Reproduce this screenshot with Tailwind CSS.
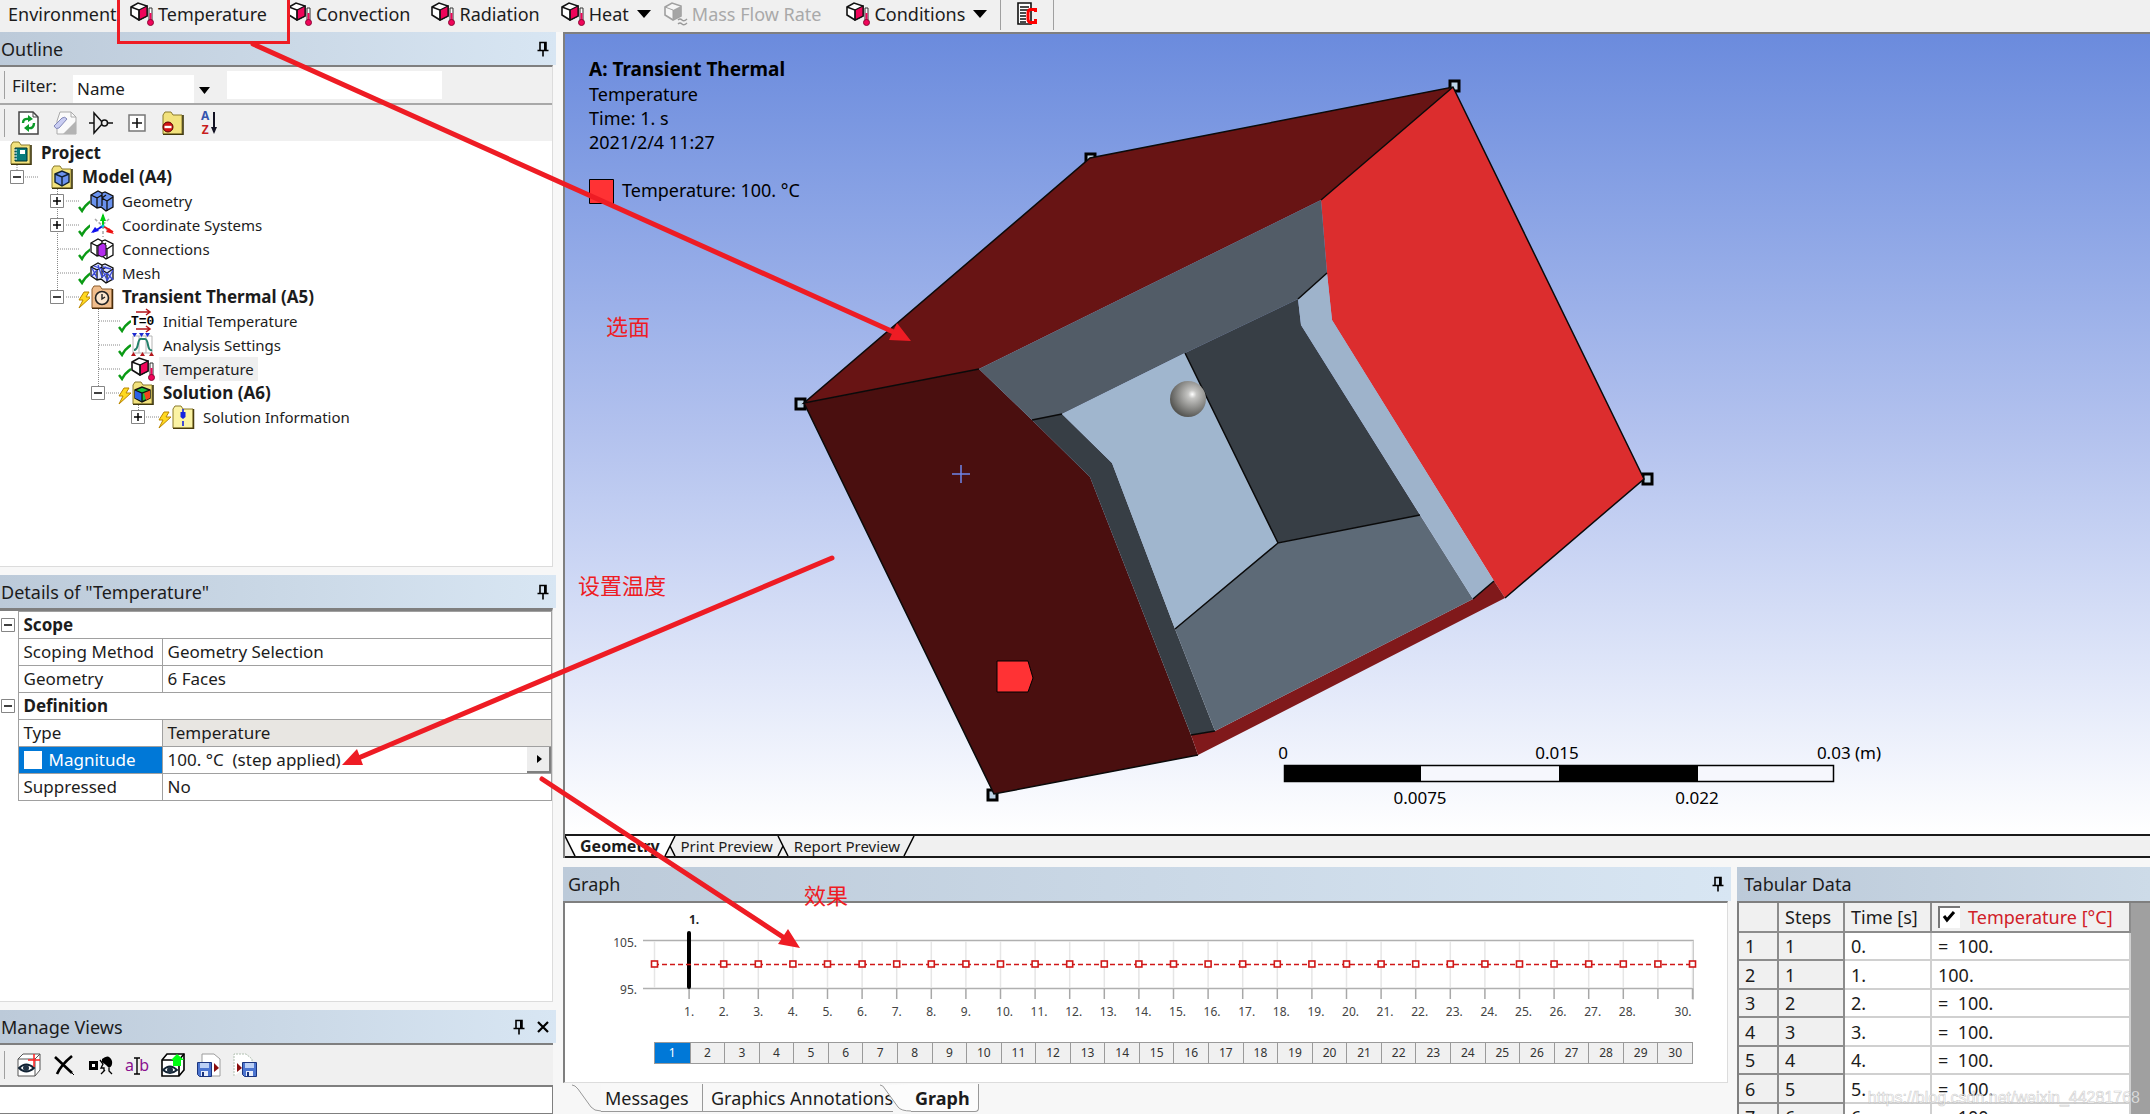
<!DOCTYPE html>
<html lang="en">
<head>
  <meta charset="UTF-8" />
  <meta name="viewport" content="width=device-width, initial-scale=1.0" />
  <title>A: Transient Thermal - Mechanical</title>
  <script src="https://cdn.jsdelivr.net/npm/@tailwindcss/browser@4"></script>
</head>
<body class="relative flex h-screen flex-col overflow-hidden bg-[#f7f7f7] font-['Noto_Sans','Noto_Sans_CJK_SC',sans-serif] text-[17px] leading-6 text-[#1c1c1c]">

  <!-- Shared icons -->
  <svg class="hidden">
    <symbol id="load" viewBox="0 0 24 24">
      <path d="M1 5 8 1l9 3v10l-8 4-8-5z" fill="#fff" stroke="#111" stroke-width="1.6" />
      <path d="M9 8l8-4v10l-8 4z" fill="#f0055a" stroke="#111" stroke-width="1.2" />
      <path d="M1 5l8 3v10" fill="none" stroke="#111" stroke-width="1.4" />
      <path d="M19 6h3v12h-3z" fill="#fff" stroke="#333" />
      <path d="M19.500 11h2v8h-2z" fill="#f0055a" />
      <circle cx="20.500" cy="20.500" r="3" fill="#f0055a" stroke="#8a0a35" />
    </symbol>
    <symbol id="pin" viewBox="0 0 12 16">
      <path d="M3 9V1.500h6V9M0.500 9.500h11M6 10v5.500" fill="none" stroke="#000" stroke-width="1.600" />
      <path d="M7 1h2v8H7z" fill="#000" />
    </symbol>
    <symbol id="plus" viewBox="0 0 14 14">
      <path d="M.5.5h13v13H.5z" fill="#fff" stroke="#858585" /><path d="M3 7h8M7 3v8" stroke="#000" stroke-width="1.500" />
    </symbol>
    <symbol id="minus" viewBox="0 0 14 14">
      <path d="M.5.5h13v13H.5z" fill="#fff" stroke="#858585" /><path d="M3 7h8" stroke="#000" stroke-width="1.500" />
    </symbol>
    <symbol id="check" viewBox="0 0 14 14">
      <path d="M1 8l3 4q3-6 9-10" fill="none" stroke="#0a9a14" stroke-width="2.400" />
    </symbol>
    <symbol id="bolt" viewBox="0 0 14 18">
      <path d="M6 1h5L8 6h5L1 17l4-8H1z" fill="#ffd91f" stroke="#b98500" />
    </symbol>
    <symbol id="folder" viewBox="0 0 24 24">
      <path d="M2 4l2-3h6l2 3h9v19H2z" fill="#f2e27d" stroke="#8a7a2a" />
      <path d="M22 4v19.500H2" fill="none" stroke="#3f370c" stroke-width="1.600" />
    </symbol>
    <symbol id="cubes" viewBox="0 0 24 24">
      <path d="M1 6l7-4 4 2 3-1 8 4v11l-7 4-5-4-4 1-6-4z" fill="currentColor" stroke="#111" stroke-width="1.300" />
      <path d="M1 6l6 3v10M7 9l5-3M12 4v13M12 9l5 3v10M17 12l6-4M12 9l4-3" fill="none" stroke="#111" stroke-width="1.300" />
    </symbol>
    <symbol id="disk" viewBox="0 0 15 15">
      <path d="M.5.5h14v14h-12l-2-2z" fill="#4b74cf" stroke="#1b357f" /><path d="M3 1h9v5H3z" fill="#bcd0f5" /><path d="M4 9h7v5H4z" fill="#e8eefb" /><path d="M5 10h2v4H5z" fill="#1b357f" />
    </symbol>
  </svg>

  <!-- Environment toolbar -->
  <header class="flex h-8 shrink-0 items-center gap-[21px] bg-[#f0f0f0] pb-1 text-[18px]">
    <div class="flex w-[109px] items-center gap-2"><span class="h-6 w-px bg-[#a0a0a0]"></span>Environment</div>
    <button class="flex items-center gap-1"><svg class="size-6"><use href="#load" /></svg>Temperature</button>
    <button class="flex items-center gap-1"><svg class="size-6"><use href="#load" /></svg>Convection</button>
    <button class="flex items-center gap-1"><svg class="size-6"><use href="#load" /></svg>Radiation</button>
    <button class="flex items-center gap-1"><svg class="size-6"><use href="#load" /></svg>Heat
      <svg class="ml-1 h-2 w-[14px]" viewBox="0 0 14 8"><path d="M0 0h14L7 8z" /></svg></button>
    <button class="-ml-2 flex items-center gap-1 text-[#a9a9a9]" disabled>
      <svg class="size-6" viewBox="0 0 24 24"><path d="M1 5 8 1l9 3v10l-8 4-8-5z" fill="#f6f6f6" stroke="#a0a0a0" stroke-width="1.600" /><path d="M9 8l8-4v10l-8 4z" fill="#a5a5a5" /><path d="M1 5l8 3v10" fill="none" stroke="#a0a0a0" /><path d="M14 18q2-2 4 0t5-1M14 22q2-2 4 0t5-1" fill="none" stroke="#999" stroke-width="1.400" /></svg>Mass Flow Rate</button>
    <button class="ml-1 flex items-center gap-1"><svg class="size-6"><use href="#load" /></svg>Conditions
      <svg class="ml-1 h-2 w-[14px]" viewBox="0 0 14 8"><path d="M0 0h14L7 8z" /></svg></button>
    <div class="-ml-2 flex items-center gap-4">
      <span class="h-8 w-px bg-[#a0a0a0]"></span>
      <button aria-label="Commands"><svg class="h-6 w-5" viewBox="0 0 20 24"><path d="M1 1h13v21H1z" fill="#fff" stroke="#111" stroke-width="1.600" /><path d="M3 5h9M3 8h9M3 11h6M3 14h6M3 17h6M3 20h6" stroke="#111" stroke-width="1.400" /><path d="M18.500 10V7.500h-5Q11 8 11 11v6q0 3 2.500 3.500h5V17" fill="none" stroke="#f00" stroke-width="3" /></svg></button>
      <span class="h-8 w-px bg-[#a0a0a0]"></span>
    </div>
  </header>

  <div class="flex min-h-0 flex-1 gap-[7px]">

    <!-- Left column -->
    <aside class="flex w-[556px] shrink-0 flex-col">
      <section class="flex h-[535px] shrink-0 flex-col">
        <div class="flex h-[33px] shrink-0 items-center justify-between bg-linear-to-r from-[#bccad9] to-[#d8e6f3] pr-[7px] pl-px text-[18px]"><h2>Outline</h2><svg class="h-4 w-3"><use href="#pin" /></svg></div>
        <div class="mr-[3px] flex min-h-0 flex-1 flex-col border-t-2 border-r border-b border-t-[#7f7f7f] border-r-[#dcdcdc] border-b-[#dcdcdc] bg-white">
          <div class="flex h-[38px] shrink-0 items-center border-b-2 border-[#a8a8a8] bg-[#f0f0f0] pl-1">
            <span class="h-7 w-px bg-[#a0a0a0]"></span>
            <label for="filter" class="w-[68px] pt-[2px] pl-[7px]">Filter:</label>
            <div class="relative mt-2 h-7 w-[142px]">
              <select id="filter" class="h-7 w-full appearance-none bg-white pl-1"><option>Name</option></select>
              <svg class="pointer-events-none absolute top-0 right-0 h-7 w-[21px] bg-[#f0f0f0]" viewBox="0 0 21 28"><path d="M5 12h11l-5.500 7z" /></svg>
            </div>
            <input type="text" aria-label="Filter text" class="ml-3 h-7 w-[215px] bg-white px-1" />
          </div>
          <div class="flex h-9 shrink-0 items-center gap-3 bg-[#f0f0f0] pl-1">
            <span class="h-7 w-px bg-[#a0a0a0]"></span>
            <button aria-label="Refresh"><svg class="size-6" viewBox="0 0 24 24"><path d="M2 1h14l5 5v17H2z" fill="#fff" stroke="#444" stroke-width="1.500" /><path d="M16 1v5h5" fill="none" stroke="#444" /><path d="M6 12q0-5 6-4M17 12q0 6-6 5" fill="none" stroke="#0b9a28" stroke-width="2.400" /><path d="M11 4l5 4-5 3zM12 13v8l-5-4z" fill="#0b9a28" /></svg></button>
            <button aria-label="Clear"><svg class="size-6" viewBox="0 0 24 24"><path d="M7 1h11l5 5v17H4V10z" fill="#fafafa" stroke="#aaa" /><path d="M11 22l12-12v13H10z" fill="#b3b3b3" /><path d="M18 1v5h5" fill="none" stroke="#aaa" /><path d="M1 15l8-8q3-2 5 1l-8 9q-3 2-5-2z" fill="#c9cdf2" stroke="#8388b8" /></svg></button>
            <button aria-label="Graph filter"><svg class="size-6" viewBox="0 0 24 24"><path d="M0 12h5M5 2v20l9-10zM18 12h6" fill="none" stroke="#111" stroke-width="1.500" /><circle cx="15.500" cy="12" r="3" fill="#f0f0f0" stroke="#111" stroke-width="1.500" /></svg></button>
            <button aria-label="Expand all"><svg class="size-6" viewBox="0 0 24 24"><path d="M4 4h16v16H4z" fill="#fff" stroke="#777" stroke-width="1.500" /><path d="M7 12h10M12 7v10" stroke="#111" stroke-width="1.600" /></svg></button>
            <button aria-label="Hide folders"><svg class="size-6" viewBox="0 0 24 24"><use href="#folder" width="24" height="24" /><circle cx="7" cy="16" r="5" fill="#d21414" stroke="#500" /><path d="M3.500 16h7" stroke="#fff" stroke-width="2.400" /></svg></button>
            <button aria-label="Sort" class="flex items-center pl-1"><span class="flex flex-col text-[12px] leading-[14px] font-bold"><span class="text-[#3554ae]">A</span><span class="text-[#c81d1d]">Z</span></span><svg class="ml-px h-6 w-2" viewBox="0 0 8 24"><path d="M4 1v20" stroke="#112" stroke-width="2" /><path d="M1 16h6l-3 7z" fill="#112" /></svg></button>
          </div>

          <ul class="text-[15px]">
            <li class="flex h-6 items-center text-[17px] font-bold"><svg class="ml-[9px] size-6" viewBox="0 0 24 24"><use href="#folder" width="24" height="24" /><path d="M6 7h12v13H6z" fill="#087c7c" stroke="#033" /><path d="M11 9h5v4h-5z" fill="#fff" /><path d="M5 9h3M5 12h3M5 15h3M5 18h3" stroke="#fff" /></svg><span class="pl-2">Project</span></li>
            <li class="flex h-6 items-center text-[17px] font-bold">
              <svg class="h-6 w-[50px]"><path d="M17 0v5M25 12h14" stroke="#888" stroke-dasharray="1 1" /><use href="#minus" x="10" y="5" width="14" height="14" /></svg>
              <svg class="size-6 text-[#6d93ef]"><use href="#folder" width="24" height="24" /><path d="M5 9l7-3 7 3v8l-7 4-7-4z" fill="currentColor" stroke="#123" stroke-width="1.400" /><path d="M5 9l7 3 7-3M12 12v8" fill="none" stroke="#123" stroke-width="1.400" /></svg><span class="pl-2">Model (A4)</span></li>
            <li class="flex h-6 items-center">
              <svg class="h-6 w-[90px]"><path d="M57.500 0v24M66 12h14" stroke="#888" stroke-dasharray="1 1" /><use href="#plus" x="50" y="5" width="14" height="14" /><use href="#check" x="78" y="10" width="14" height="14" /></svg>
              <svg class="size-6 text-[#6a92ee]"><use href="#cubes" /></svg><span class="pl-2">Geometry</span></li>
            <li class="flex h-6 items-center">
              <svg class="h-6 w-[90px]"><path d="M57.500 0v24M66 12h14" stroke="#888" stroke-dasharray="1 1" /><use href="#plus" x="50" y="5" width="14" height="14" /><use href="#check" x="78" y="10" width="14" height="14" /></svg>
              <svg class="size-6" viewBox="0 0 24 24"><path d="M5 6l14 13M19 6L7 17M13 13v11" stroke="#aaa" stroke-width="1.600" stroke-dasharray="3 2" /><path d="M13 14V2" stroke="#0c1" stroke-width="2" /><path d="M13 0l3 8h-6z" fill="#0c1" /><path d="M13 13l10 6" stroke="#e11" stroke-width="2" /><path d="M24 21l-8-2 3-4z" fill="#e11" /><path d="M13 13L3 19" stroke="#11e" stroke-width="2" /><path d="M1 20l4-6 4 4z" fill="#11e" /><circle cx="13" cy="13" r="1.600" fill="#0cc" /></svg><span class="pl-2">Coordinate Systems</span></li>
            <li class="flex h-6 items-center">
              <svg class="h-6 w-[90px]"><path d="M57.500 0v24M58 12h22" stroke="#888" stroke-dasharray="1 1" /><use href="#check" x="78" y="10" width="14" height="14" /></svg>
              <svg class="size-6 text-white" viewBox="0 0 24 24"><use href="#cubes" /><path d="M8 9l5-3 3 2v10l-4 2-4-2z" fill="#b32bee" stroke="#111" /></svg><span class="pl-2">Connections</span></li>
            <li class="flex h-6 items-center">
              <svg class="h-6 w-[90px]"><path d="M57.500 0v24M58 12h22" stroke="#888" stroke-dasharray="1 1" /><use href="#check" x="78" y="10" width="14" height="14" /></svg>
              <svg class="size-6 text-[#dfe4ff]" viewBox="0 0 24 24"><use href="#cubes" /><path d="M2 7l5 10M2 15l5-6M4 5l8 3M12 8l5 11M12 16l5-4M17 20l6-11M17 12l6 7M13 6l8 2M8 4l4 12" fill="none" stroke="#3a48d8" stroke-width="1.300" /></svg><span class="pl-2">Mesh</span></li>
            <li class="flex h-6 items-center text-[17px] font-bold">
              <svg class="h-6 w-[90px]"><path d="M57.500 0v5M66 12h14" stroke="#888" stroke-dasharray="1 1" /><use href="#minus" x="50" y="5" width="14" height="14" /><use href="#bolt" x="78" y="6" width="14" height="18" /></svg>
              <svg class="size-6" viewBox="0 0 24 24"><path d="M2 4l2-3h6l2 3h10v19H2z" fill="#f0bd8c" stroke="#8a5a2a" /><path d="M22.500 4v19.500H2" fill="none" stroke="#4a2c0c" stroke-width="1.500" /><circle cx="12" cy="13" r="6.500" fill="#fbe6cf" stroke="#222" stroke-width="1.600" /><path d="M12 9v5l3-2" fill="none" stroke="#222" stroke-width="1.400" /></svg><span class="pl-2">Transient Thermal (A5)</span></li>
            <li class="flex h-6 items-center">
              <svg class="h-6 w-[131px]"><path d="M98.500 0v24M99 12h21" stroke="#888" stroke-dasharray="1 1" /><use href="#check" x="118" y="10" width="14" height="14" /></svg>
              <svg class="h-6 w-6 overflow-visible" viewBox="0 0 24 24"><path d="M5 3h14M15 0l4 3-4 3M5 20h14M15 17l4 3-4 3" fill="none" stroke="#b3161b" stroke-width="1.500" /><text x="0" y="16" font-size="13" font-weight="700" font-family="Liberation Mono">T=0</text></svg><span class="pl-2">Initial Temperature</span></li>
            <li class="flex h-6 items-center">
              <svg class="h-6 w-[131px]"><path d="M98.500 0v24M99 12h21" stroke="#888" stroke-dasharray="1 1" /><use href="#check" x="118" y="10" width="14" height="14" /></svg>
              <svg class="size-6" viewBox="0 0 24 24"><path d="M2 3h19v17H2zM8 3v17M15 3v17" fill="none" stroke="#b5b5b5" /><path d="M3 17q3 0 4-6t4-5h3q2 0 3 6t4 5" fill="none" stroke="#22806a" stroke-width="2" /><path d="M1 0h5L3.500 4zM8 0h5l-2.500 4zM14 0h5l-2.500 4z" fill="#1c2bd0" /><path d="M0 23h5l-2.500-4zM9 23h5l-2.500-4zM18 23h5l-2.500-4z" fill="#b3161b" /></svg><span class="pl-2">Analysis Settings</span></li>
            <li class="flex h-6 items-center">
              <svg class="h-6 w-[131px]"><path d="M98.500 0v24M99 12h21" stroke="#888" stroke-dasharray="1 1" /><use href="#check" x="118" y="10" width="14" height="14" /></svg>
              <svg class="size-6"><use href="#load" /></svg><span class="ml-1 bg-[#efefef] px-1">Temperature</span></li>
            <li class="flex h-6 items-center text-[17px] font-bold">
              <svg class="h-6 w-[131px]"><path d="M98.500 0v5M106 12h14" stroke="#888" stroke-dasharray="1 1" /><use href="#minus" x="91" y="5" width="14" height="14" /><use href="#bolt" x="118" y="6" width="14" height="18" /></svg>
              <svg class="size-6" viewBox="0 0 24 24"><use href="#folder" width="24" height="24" /><path d="M4 9l7-3 8 3v8l-8 4-7-4z" fill="#18c43a" stroke="#111" stroke-width="1.400" /><path d="M4 9l7 3v8l-7-3z" fill="#2a62e8" /><path d="M13 12l6-3v8l-4 2z" fill="#f0441c" /><path d="M4 9l7 3 8-3M11 12v8" fill="none" stroke="#111" stroke-width="1.300" /></svg><span class="pl-2">Solution (A6)</span></li>
            <li class="flex h-6 items-center">
              <svg class="h-6 w-[171px]"><path d="M138.500 0v5M146 12h14" stroke="#888" stroke-dasharray="1 1" /><use href="#plus" x="131" y="5" width="14" height="14" /><use href="#bolt" x="158" y="6" width="14" height="18" /></svg>
              <svg class="size-6" viewBox="0 0 24 24"><path d="M2 4l2-3h6l2 3h10v19H2z" fill="#fbf3a4" stroke="#8a7a2a" /><path d="M22.500 4v19.500H2" fill="none" stroke="#4a3c0c" stroke-width="1.500" /><path d="M12 4v9M12 16v5" stroke="#1424e0" stroke-width="1.600" /><path d="M9.500 7h5v5l-2.500 2-2.500-2z" fill="#1424e0" /></svg><span class="pl-2">Solution Information</span></li>
          </ul>
        </div>
      </section>

      <section class="mt-2 flex min-h-0 flex-1 flex-col">
        <div class="flex h-[33px] shrink-0 items-center justify-between bg-linear-to-r from-[#bccad9] to-[#d8e6f3] pr-[7px] pl-px text-[18px]"><h2>Details of "Temperature"</h2><svg class="h-4 w-3"><use href="#pin" /></svg></div>
        <div class="mr-[3px] min-h-0 flex-1 border-t-[3px] border-r border-b border-t-[#7f7f7f] border-r-[#dcdcdc] border-b-[#dcdcdc] bg-white">
          <table class="w-full table-fixed border-collapse">
            <colgroup><col class="w-[18px]"><col class="w-[144px]"><col></colgroup>
            <tr class="h-[27px]"><td><svg class="ml-px size-[14px]"><use href="#minus" /></svg></td><th colspan="2" class="border border-[#a0a0a0] pl-[5px] text-left">Scope</th></tr>
            <tr class="h-[27px]"><td></td><td class="border border-[#a0a0a0] pl-[5px] whitespace-nowrap">Scoping Method</td><td class="border border-[#a0a0a0] pl-[5px]">Geometry Selection</td></tr>
            <tr class="h-[27px]"><td></td><td class="border border-[#a0a0a0] pl-[5px]">Geometry</td><td class="border border-[#a0a0a0] pl-[5px]">6 Faces</td></tr>
            <tr class="h-[27px]"><td><svg class="ml-px size-[14px]"><use href="#minus" /></svg></td><th colspan="2" class="border border-[#a0a0a0] pl-[5px] text-left">Definition</th></tr>
            <tr class="h-[27px]"><td></td><td class="border border-[#a0a0a0] pl-[5px]">Type</td><td class="border border-[#a0a0a0] bg-[#e8e6e2] pl-[5px]">Temperature</td></tr>
            <tr class="h-[27px]"><td></td><td class="border border-[#a0a0a0] bg-[#0078d7] pl-[5px] text-white"><label class="flex items-center gap-[7px]"><input type="checkbox" class="size-[18px] appearance-none bg-white">Magnitude</label></td><td class="border border-[#a0a0a0] pl-[5px]"><div class="flex items-center justify-between">100. °C &nbsp;(step applied)<button aria-label="More" class="h-[26px] w-6 border-r-2 border-b-2 border-[#7f7f7f] bg-[#ededed] pl-[10px]"><svg class="h-2 w-[5px]" viewBox="0 0 5 8"><path d="M0 0l5 4-5 4z" /></svg></button></div></td></tr>
            <tr class="h-[27px]"><td></td><td class="border border-[#a0a0a0] pl-[5px]">Suppressed</td><td class="border border-[#a0a0a0] pl-[5px]">No</td></tr>
          </table>
        </div>
      </section>

      <section class="mt-2 flex h-[104px] shrink-0 flex-col">
        <div class="flex h-[33px] shrink-0 items-center gap-3 bg-linear-to-r from-[#bccad9] to-[#d8e6f3] pr-[7px] pl-px text-[18px]"><h2 class="flex-1">Manage Views</h2><svg class="h-4 w-3"><use href="#pin" /></svg><button aria-label="Close"><svg class="size-3" viewBox="0 0 12 12"><path d="M1 1l10 10M11 1L1 11" stroke="#000" stroke-width="2.200" /></svg></button></div>
        <div class="mr-[3px] flex flex-1 flex-col border-t-2 border-[#7f7f7f] bg-[#f0f0f0]">
          <div class="flex h-10 items-center gap-3 pl-1">
            <span class="h-7 w-px bg-[#a0a0a0]"></span>
            <button aria-label="Create view"><svg class="size-6" viewBox="0 0 24 24"><path d="M1 6l5-5h17v16l-5 6H1z" fill="#fff" stroke="#555" /><path d="M1 6h17v17M18 6l5-5" fill="none" stroke="#555" /><path d="M2 15q7-7 15 0-8 7-15 0z" fill="#fff" stroke="#123" stroke-width="1.800" /><circle cx="9" cy="15" r="3" fill="#234" /><path d="M17 1v13M11 7h12" stroke="#f22" stroke-width="1.500" /></svg></button>
            <button aria-label="Delete"><svg class="size-6" viewBox="0 0 24 24"><path d="M2 4l17 16M19 3Q8 12 4 21" fill="none" stroke="#000" stroke-width="2.600" /><path d="M19 20l2 2" stroke="#000" /></svg></button>
            <button aria-label="Apply view"><svg class="size-6" viewBox="0 0 24 24"><path d="M1.500 9.500h6v6h-6z" fill="#fff" stroke="#000" stroke-width="3" /><path d="M13 6q7-6 10 2 1 5-3 7l-3-3-4-3z" fill="#000" /><path d="M11 7l3 4-2 4h3v3M20 15v3l3 3M12 21l4-4" fill="none" stroke="#000" stroke-width="1.300" /></svg></button>
            <button aria-label="Rename" class="relative flex w-6 justify-between text-[16px] text-[#8a118f]"><span>a</span><span>b</span><svg class="absolute top-1 left-2 h-[18px] w-2" viewBox="0 0 8 18"><path d="M1 1h6M4 1v16M1 17h6" fill="none" stroke="#000" stroke-width="1.400" /></svg></button>
            <button aria-label="Replace view"><svg class="size-6" viewBox="0 0 24 24"><path d="M1 7l5-6h17v16l-5 6H1z" fill="#fff" stroke="#000" stroke-width="1.600" /><path d="M1 7h17v16M18 7l5-6" fill="none" stroke="#000" stroke-width="1.600" /><path d="M2 17q7-7 14 0-7 6-14 0z" fill="#fff" stroke="#123" stroke-width="1.800" /><circle cx="9" cy="17" r="3" fill="#234" /><path d="M16 1l7 6h-3v6h-8V7h-2z" fill="#0f1" /></svg></button>
            <button aria-label="Import"><svg class="size-6" viewBox="0 0 24 24"><path d="M5 10V1h12l6 5v17h-9" fill="#fff" stroke="#9c9c9c" /><use href="#disk" x="0" y="9" width="15" height="15" /><path d="M17 10l5 5-5 4z" fill="#8a0d0d" /></svg></button>
            <button aria-label="Export"><svg class="size-6" viewBox="0 0 24 24"><path d="M1 23V1h12l6 5v4" fill="#fff" stroke="#b0c0b0" stroke-dasharray="2 1" /><use href="#disk" x="9" y="9" width="15" height="15" /><path d="M4 10l5 5-5 4z" fill="#8a0d0d" /></svg></button>
          </div>
          <div class="flex-1 border-t-2 border-r border-b border-[#7f7f7f] bg-white"></div>
        </div>
      </section>
    </aside>

    <!-- Graphics and data -->
    <main class="flex min-w-0 flex-1 flex-col">
      <div class="flex min-h-0 flex-1 flex-col border-t-2 border-l-2 border-[#7f7f7f]">
        <div class="min-h-0 flex-1 bg-linear-to-b from-[#6b8bdd] via-[#b3c2ee] to-white">
          <svg class="block h-full w-full" viewBox="565 34 1585 800" preserveAspectRatio="xMinYMin meet">
            <defs><radialGradient id="ball" cx="62%" cy="37%" r="65%"><stop offset="0" stop-color="#fff" /><stop offset=".18" stop-color="#c5c5c3" /><stop offset="1" stop-color="#555552" /></radialGradient></defs>
            <!-- Corner markers -->
            <g fill="#bcd3e6" stroke="#000" stroke-width="3">
              <path d="M1450 81h9v10h-9zM1086 154h9v10h-9zM796 399h9v10h-9zM988 790h9v10h-9zM1643 474h9v10h-9z" />
            </g>
            <!-- Outer faces -->
            <path d="M804 403L1090 158 1453 87 1321 200 979 369z" fill="#681414" />
            <path d="M804 403L979 369 1032 420 1090 477 1191 735 1198 755 994 794z" fill="#4a0f0f" />
            <path d="M1453 87L1644 479 1505 598 1494 581 1332 320 1327 273 1321 200z" fill="#dc2d2e" />
            <path d="M1191 735L1215 731 1473 599 1494 581 1505 598 1198 755z" fill="#80191b" />
            <!-- Inner faces -->
            <path d="M979 369L1321 200 1327 273 1298 299 1185 353 1062 414 1032 420z" fill="#525c67" />
            <path d="M1032 420L1062 414 1112 463 1175 629 1215 731 1191 735 1090 477z" fill="#373e45" />
            <path d="M1062 414L1185 353 1278 543 1175 629 1112 463z" fill="#a0b6ce" />
            <path d="M1185 353L1298 299 1301 325 1420 515 1278 543z" fill="#373e45" />
            <path d="M1278 543L1420 515 1473 599 1215 731 1175 629z" fill="#5d6a77" />
            <path d="M1298 299L1327 273 1332 320 1494 581 1473 599 1301 325z" fill="#9eb3cb" />
            <path d="M979 369L804 403 1090 158 1453 87 1644 479 1505 598M804 403L994 794 1198 755M1453 87L1321 200M1327 273L1298 299M1032 420L1062 414M1185 353L1278 543 1420 515M1278 543L1175 629M1191 735L1215 731M1473 599L1494 581" fill="none" stroke="#0a0a0a" stroke-width="1.500" />
            <circle cx="1188" cy="399" r="18" fill="url(#ball)" />
            <path d="M961 465v18M952 474h18" stroke="#6f86ea" stroke-width="1.500" />
            <path d="M997 661h31l5 17-5 14h-31z" fill="#ff3234" stroke="#000" />
            <!-- Legend -->
            <g fill="#000" font-size="18">
              <text x="589" y="76" font-size="19" font-weight="700">A: Transient Thermal</text>
              <text x="589" y="101">Temperature</text>
              <text x="589" y="125">Time: 1. s</text>
              <text x="589" y="149">2021/2/4 11:27</text>
              <path d="M589.500 179.500h24v24h-24z" fill="#ff3234" stroke="#000" />
              <text x="622" y="197">Temperature: 100. °C</text>
            </g>
            <!-- Ruler -->
            <path d="M1284.500 765.500h549v16h-549z" fill="#f6f7fd" stroke="#000" stroke-width="1.500" />
            <path d="M1284 765h137v17h-137zM1559 765h139v17h-139z" />
            <g fill="#000" font-size="17" text-anchor="middle">
              <text x="1283" y="759">0</text><text x="1557" y="759">0.015</text><text x="1849" y="759">0.03 (m)</text>
              <text x="1420" y="804">0.0075</text><text x="1697" y="804">0.022</text>
            </g>
          </svg>
        </div>
        <nav class="flex h-6 shrink-0 items-center border-y-2 border-[#1a1a1a] bg-[#f0f0f0] text-[15px]">
          <svg class="h-full w-3" viewBox="0 0 12 20" preserveAspectRatio="none"><path d="M0 0h12v20h-2z" fill="#fff" /><path d="M0 0l10 20" stroke="#000" stroke-width="1.500" /></svg>
          <button class="h-full bg-white px-[3px] text-[16px] leading-5 font-bold">Geometry</button>
          <svg class="h-full w-4" viewBox="0 0 16 20" preserveAspectRatio="none"><path d="M0 0h12L2 20H0z" fill="#fff" /><path d="M12 0L2 20M7 10l5 10" fill="none" stroke="#000" stroke-width="1.500" /></svg>
          <button class="px-[2px] leading-5">Print Preview</button>
          <svg class="h-full w-[17px]" viewBox="0 0 17 20" preserveAspectRatio="none"><path d="M3 0l10 20M3 20l5-10" fill="none" stroke="#000" stroke-width="1.500" /></svg>
          <button class="px-[2px] leading-5">Report Preview</button>
          <svg class="h-full w-[14px]" viewBox="0 0 14 20" preserveAspectRatio="none"><path d="M12 0L2 20" stroke="#000" stroke-width="1.500" /></svg>
        </nav>
      </div>

      <div class="mt-[9px] flex h-[247px] shrink-0 gap-[6px]">
        <section class="flex min-w-0 flex-1 flex-col">
          <div class="flex h-[34px] shrink-0 items-center justify-between bg-linear-to-r from-[#bccad9] to-[#d8e6f3] pr-[7px] pl-[5px] text-[18px]"><h2>Graph</h2><svg class="h-4 w-3"><use href="#pin" /></svg></div>
          <div class="mr-[3px] flex h-[182px] flex-col border-t-2 border-r border-b border-l-2 border-t-[#7f7f7f] border-r-[#dcdcdc] border-b-[#dcdcdc] border-l-[#7f7f7f] bg-white">
            <svg id="chart" class="block h-[139px] w-full" viewBox="565 903 1162 139" preserveAspectRatio="none">
              <path d="M643 940.500h1050V989M643 988.500h1050v11" fill="none" stroke="#b0b0b0" stroke-width="1.500" />
              <g font-size="12" fill="#444"><text x="637" y="947" text-anchor="end">105.</text><text x="637" y="994" text-anchor="end">95.</text><text x="689" y="924" font-weight="700" fill="#222">1.</text></g>
            </svg>
            <div id="steps" class="mr-[34px] ml-[89px] grid h-[22px] grid-cols-30 border border-[#9a9a9a] text-[12px]"></div>
          </div>
          <nav class="mt-px flex h-[30px] items-start text-[18px]">
            <svg class="h-7 w-[38px] pl-2" viewBox="0 0 30 28"><path d="M1 1q3 0 6 4l13 18q3 4 10 4" fill="none" stroke="#999" /></svg>
            <button class="h-7 w-[102px] border-r border-b border-[#999] bg-[#f8f8f8] pl-1 text-left leading-6">Messages</button>
            <button class="h-7 border-b border-[#999] bg-[#f8f8f8] pl-2 leading-6">Graphics Annotations</button>
            <svg class="-ml-[14px] h-7 w-[32px]" viewBox="0 0 32 28"><path d="M1 1q3 0 5 4l13 18q3 4 13 4V0z" fill="#fcfcfc" /><path d="M1 1q3 0 5 4l13 18q3 4 13 4" fill="none" stroke="#999" /></svg>
            <button class="h-7 rounded-br border-r border-b border-[#999] bg-[#fcfcfc] pr-2 pl-1 leading-6 font-bold">Graph</button>
          </nav>
        </section>

        <section class="flex w-[413px] shrink-0 flex-col overflow-hidden">
          <div class="flex h-[34px] shrink-0 items-center bg-linear-to-r from-[#bccad9] to-[#cddbe8] pl-[7px] text-[18px]"><h2>Tabular Data</h2></div>
          <div class="min-h-0 flex-1 overflow-hidden border-t-2 border-l-2 border-[#7f7f7f] bg-[#a0a0a0]">
            <table class="w-[391px] table-fixed border-collapse text-[18px]">
              <colgroup><col class="w-[39px]"><col class="w-[66px]"><col class="w-[87px]"><col class="w-[199px]"></colgroup>
              <thead>
                <tr class="h-[29px] bg-[#f0f0f0]">
                  <th class="border-r-2 border-b-2 border-[#8c8c8c]"></th>
                  <th class="border-r-2 border-b-2 border-[#8c8c8c] pl-[6px] text-left font-normal">Steps</th>
                  <th class="border-r-2 border-b-2 border-[#8c8c8c] pl-[6px] text-left font-normal">Time [s]</th>
                  <th class="border-r-2 border-b-2 border-[#8c8c8c] pl-[6px] text-left font-normal text-[#d02028]"><label class="flex items-center gap-2"><span class="relative flex size-[22px] shrink-0"><input type="checkbox" checked class="size-[22px] appearance-none border-t-2 border-l-2 border-[#777] bg-white"><svg class="pointer-events-none absolute top-1 left-1 size-[14px]" viewBox="0 0 14 14"><path d="M2 6l3 4 7-8" fill="none" stroke="#000" stroke-width="3" /></svg></span><span class="whitespace-nowrap">Temperature [°C]</span></label></th>
                </tr>
              </thead>
              <tbody id="rows"></tbody>
            </table>
          </div>
        </section>
      </div>
    </main>
  </div>

  <!-- Notes drawn over the window -->
  <svg class="pointer-events-none absolute inset-0 h-full w-full" viewBox="0 0 2150 1114" preserveAspectRatio="xMinYMin meet">
    <path d="M118.500 0v42.500h170V0" fill="none" stroke="#ee1c24" stroke-width="3" />
    <g stroke="#ee1c24" stroke-width="5" stroke-linecap="round"><path d="M253 44l645 290M832 558L356 759M542 779l247 162" /></g>
    <path d="M911 341l-22-1 8-17zM342 765l15-16 6 16zM800 948l-22-4 10-15z" fill="#ee1c24" />
    <g fill="#ee1c24" font-size="22"><text x="606" y="335">选面</text><text x="578" y="594">设置温度</text><text x="804" y="904">效果</text></g>
    <text x="2140" y="1103" text-anchor="end" font-size="16" fill="#fff" fill-opacity=".8" stroke="#999" stroke-opacity=".5" stroke-width=".6" font-family="Liberation Sans">https://blog.csdn.net/weixin_44281768</text>
  </svg>

  <script>
    // Chart: one marker per second, 100 °C throughout
    const x = i => 654.5 + i * 34.6;
    let grid = '', marks = '', labels = '', steps = '', rows = '';
    for (let i = 0; i <= 30; i++) {
      grid += `<path d="M${x(i)} 941v47" stroke="#e6e6e6" stroke-width="1.5"/>`;
      if (i > 0) grid += `<path d="M${x(i)} 989v10" stroke="#a8a8a8" stroke-width="1.5"/>`;
      if (i !== 1) marks += `<rect x="${x(i) - 3}" y="961" width="6" height="6" fill="#fff" stroke="#d01818" stroke-width="1.6"/>`;
      if (i > 0 && i !== 29) labels += `<text x="${i === 30 ? 1683 : x(i) + (i > 9 ? 4 : 0)}" y="1016" text-anchor="middle">${i}.</text>`;
      if (i > 0) steps += i === 1
        ? '<button class="bg-[#0078d7] leading-5 text-white">1</button>'
        : `<button class="border-l border-[#9a9a9a] bg-[#f0f0f0] leading-5 text-[#333]">${i}</button>`;
    }
    document.getElementById('chart').innerHTML += grid +
      '<path d="M689 933v54" stroke="#000" stroke-width="4" stroke-linecap="round"/>' +
      '<path d="M654 964.500h1039" stroke="#d01818" stroke-width="1.5" stroke-dasharray="5 3"/>' +
      marks + `<g font-size="12" fill="#444">${labels}</g>`;
    document.getElementById('steps').innerHTML = steps;

    // Tabular data
    for (let i = 0; i < 7; i++) {
      rows += `<tr class="odd:h-[28px] even:h-[29px]">
        <td class="border-r-2 border-b-2 border-[#8c8c8c] bg-[#f0f0f0] pl-[6px]">${i + 1}</td>
        <td class="border-r-2 border-b-2 border-[#8c8c8c] bg-[#f0f0f0] pl-[6px]">${Math.max(i, 1)}</td>
        <td class="border-r-2 border-b-2 border-[#d0d0d0] bg-white pl-[6px]">${i}.</td>
        <td class="border-r-2 border-b-2 border-[#d0d0d0] bg-white pl-[6px]">${i === 1 ? '' : '=&nbsp; '}100.</td></tr>`;
    }
    document.getElementById('rows').innerHTML = rows;
  </script>
</body>
</html>
